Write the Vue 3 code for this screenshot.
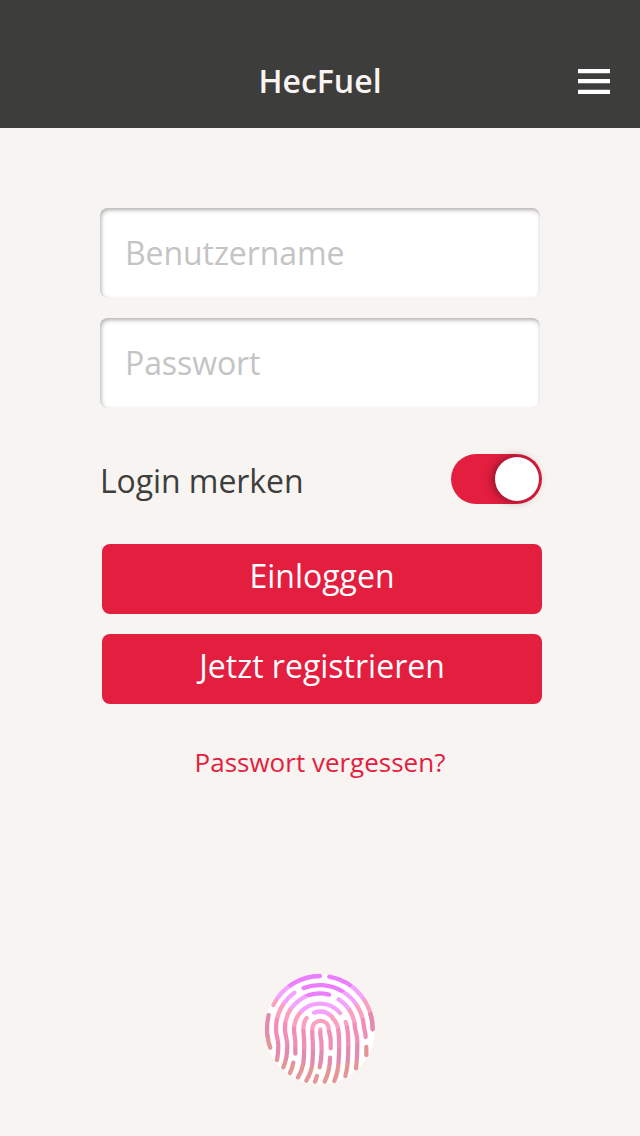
<script setup>
import { ref } from 'vue'

const username = ref('')
const password = ref('')
const remember = ref(true)

const ridges = [
  'M40 111 A158 158 0 0 1 180 24',
  'M208 26 A158 158 0 0 1 338 184',
  'M103 74 A133 133 0 0 0 48 184 C48 202 55 214 55 232 C55 248 54 262 51 276',
  'M131 60 A133 133 0 0 1 311 170 C312 186 317 192 317 207',
  'M207 80 A105 105 0 0 0 75 184 C75 202 82 212 82 232 C82 262 78 280 70 298',
  'M236 94 A105 105 0 0 1 285 180 C287 194 292 202 292 220 C292 252 291 278 288 301',
  'M240 135 A78 78 0 0 0 102 184 C102 200 106 208 106 222 V257',
  'M257 162 C264 180 265 200 265 230 C265 272 262 304 256 324',
  'M162 134 C182 127 202 132 216 146',
  'M140 150 C128 164 129 181 131 198 C134 230 133 258 130 286 C127 304 121 316 114 328',
  'M139 338 C148 323 155 308 157 287 C159 260 160 228 157 205 V184 C157 150 205 150 206 183 C206 194 212 200 212 217 V241',
  'M218 151 C230 162 234 174 235 188 C238 208 238 244 236 277 C235 304 230 322 223 339',
  'M181 184 V199 C187 227 186 269 179 298',
  'M210 269 C210 298 204 320 194 341',
  'M171 324 L165 341',
  'M100 284 Q97 301 90 315'
]
</script>

<template>
  <div class="screen">
    <header>
      <h1>HecFuel</h1>
      <button class="menu" aria-label="Menü">
        <svg viewBox="0 0 32 26" width="32" height="26">
          <path fill="#fff" d="M0 1h32v4.2H0zM0 11h32v4.3H0zM0 21.7h32V26H0z" />
        </svg>
      </button>
    </header>
    <main>
      <input v-model="username" type="text" placeholder="Benutzername">
      <input v-model="password" type="password" placeholder="Passwort">
      <div class="remember">
        <span>Login merken</span>
        <button class="toggle" :class="{ on: remember }" role="switch" :aria-checked="remember" @click="remember = !remember">
          <span class="knob"></span>
        </button>
      </div>
      <button class="action">Einloggen</button>
      <button class="action">Jetzt registrieren</button>
      <a class="forgot">Passwort vergessen?</a>
      <svg class="touch" viewBox="0 0 360 360" width="120" height="120">
        <defs>
          <radialGradient id="bands" gradientUnits="userSpaceOnUse" cx="180" cy="-48" r="420">
            <stop offset=".328" stop-color="#ec7dff" />
            <stop offset=".332" stop-color="#f4a1ff" />
            <stop offset=".452" stop-color="#f4a1ff" />
            <stop offset=".456" stop-color="#faa0c0" />
            <stop offset=".56" stop-color="#faa0c0" />
            <stop offset=".564" stop-color="#f18db8" />
            <stop offset=".702" stop-color="#f18db8" />
            <stop offset=".706" stop-color="#e28bb1" />
            <stop offset=".81" stop-color="#e28bb1" />
            <stop offset=".814" stop-color="#e59595" />
          </radialGradient>
        </defs>
        <circle cx="180" cy="183" r="165" fill="#fff" />
        <g fill="none" stroke-width="12.8" stroke-linecap="round">
          <path v-for="d in ridges" :key="d" :d="d" stroke="url(#bands)" />
          <path d="M331 139 Q338 159 338 184" stroke="#e28bb1" />
          <path d="M23 204 Q25 226 31 239" stroke="#e59595" />
          <path d="M26 141 Q19 171 22 204" stroke="#e28bb1" />
          <path d="M319 237 V261" stroke="#e59595" />
        </g>
      </svg>
    </main>
  </div>
</template>

<style>
body { margin: 0; background: #f8f4f1; }
</style>

<style scoped>
.screen {
  width: 640px;
  height: 1136px;
  background: #f8f4f1;
  color: #3e3e3c;
  font-family: "Open Sans", "Noto Sans", sans-serif;
  font-size: 32px;
  overflow: hidden;
}
header {
  box-sizing: border-box;
  height: 128px;
  padding: 0 30px;
  background: #3d3d3b;
  display: grid;
  grid-template-columns: 32px 1fr 32px;
  align-items: start;
}
h1 {
  grid-column: 2;
  margin: 59px 0 0;
  color: #f8f4f1;
  font-size: 32px;
  font-weight: 600;
  line-height: 44px;
  text-align: center;
}
button { border: 0; padding: 0; font: inherit; }
.menu { background: none; height: 26px; margin-top: 68px; }
.menu svg { display: block; }
main {
  display: flex;
  flex-direction: column;
  width: 442px;
  margin-left: 100px;
  padding-top: 80px;
}
input {
  box-sizing: border-box;
  width: 440px;
  height: 90px;
  margin: 0 0 20px;
  padding: 0 25px 2px;
  border: 0;
  border-radius: 8px;
  outline: 0;
  background: #fff;
  box-shadow: inset 1px 2px 4px rgba(0, 0, 0, .33);
  font: inherit;
  letter-spacing: -.08px;
  color: #3e3e3c;
}
input::placeholder { color: #c4c4c4; opacity: 1; }
.remember {
  display: flex;
  justify-content: space-between;
  height: 50px;
  margin: 26px 0 40px;
  line-height: 54px;
  letter-spacing: -.08px;
}
.toggle {
  box-sizing: border-box;
  width: 91px;
  height: 50px;
  padding: 3px;
  border-radius: 25px;
  background: #bbb;
  display: flex;
}
.toggle.on { background: #e31e3f; justify-content: flex-end; }
.knob {
  width: 44px;
  height: 44px;
  border-radius: 50%;
  background: #fff;
  box-shadow: -2px 0 10px rgba(0, 0, 0, .42);
}
.action {
  width: 440px;
  height: 70px;
  margin: 0 0 20px 2px;
  padding-bottom: 8px;
  border-radius: 8px;
  background: #e31e3f;
  color: #fff;
}
.forgot {
  margin: 20px 2px 0 0;
  color: #e31e3f;
  font-size: 26px;
  line-height: 36px;
  text-align: center;
}
.touch { display: block; margin: 188px 0 0 160px; }
</style>
